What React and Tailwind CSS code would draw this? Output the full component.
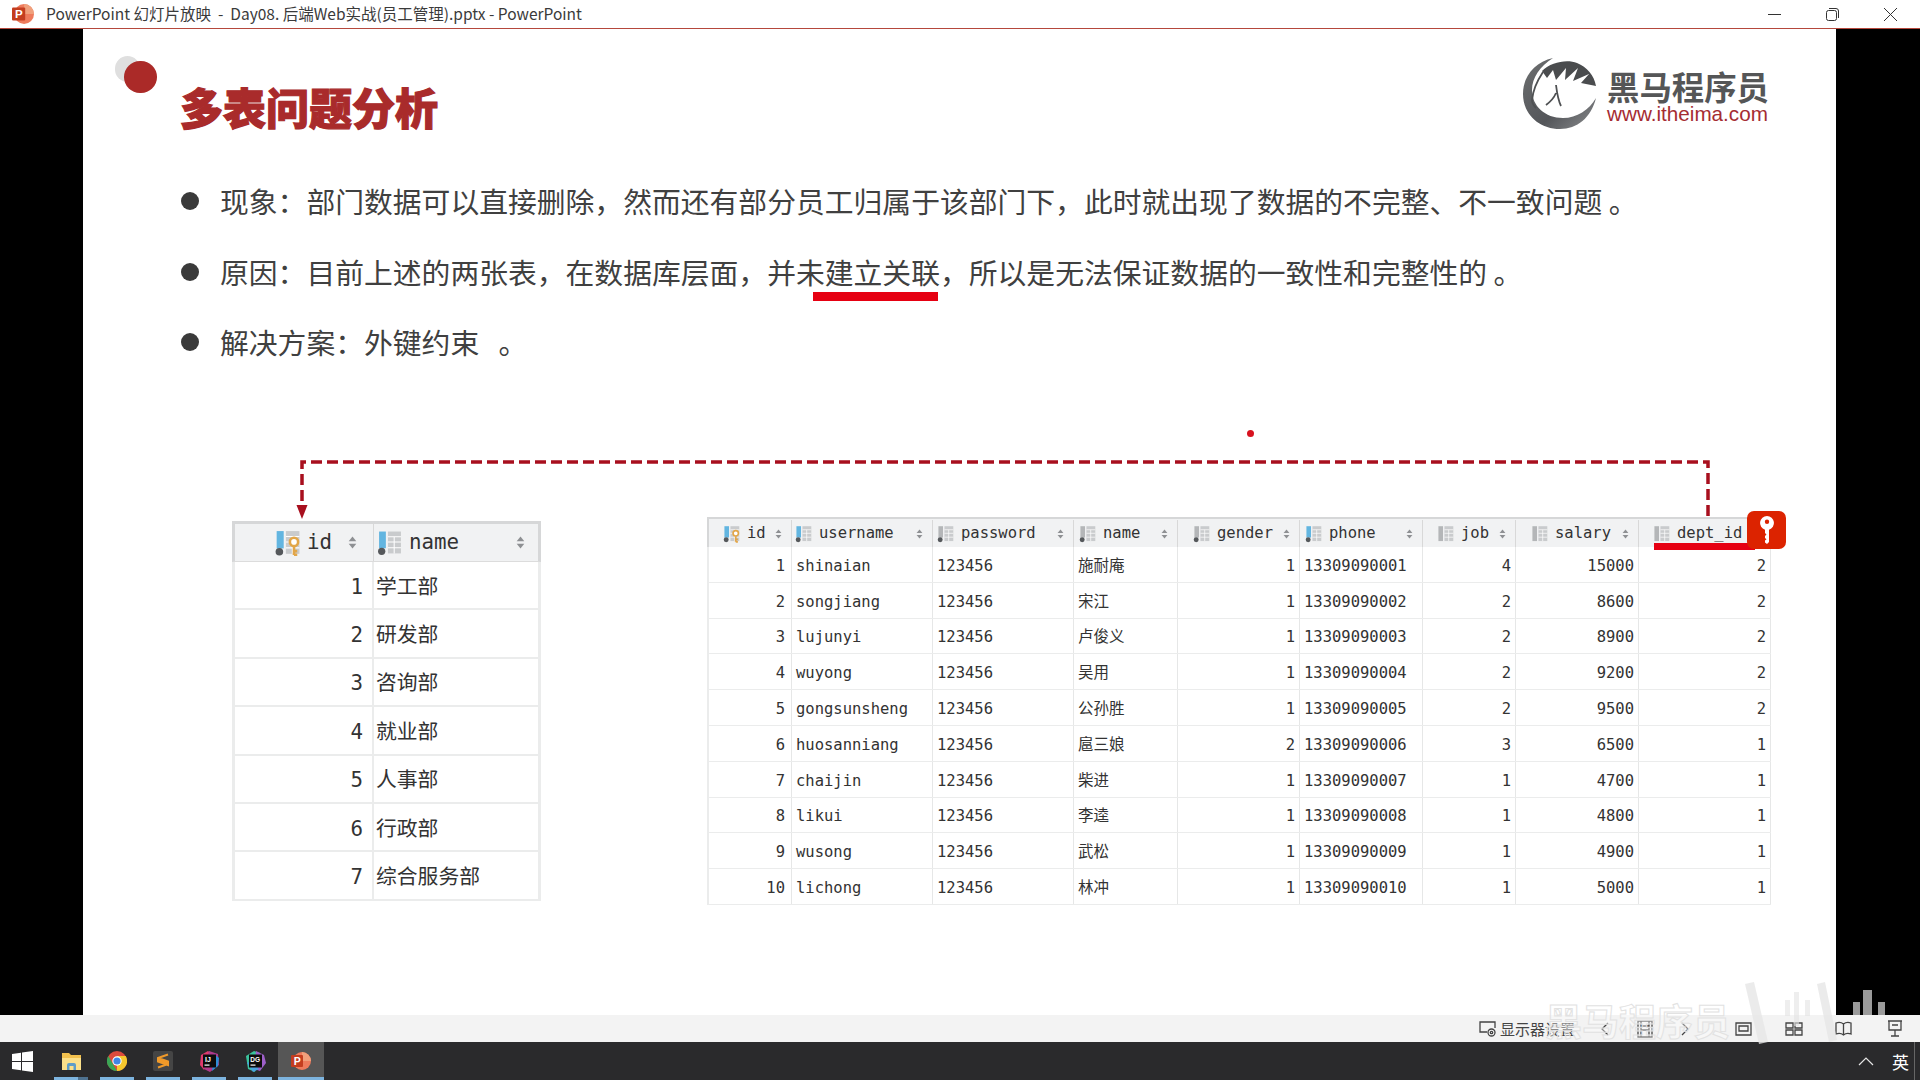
// PowerPoint slideshow window showing the "多表问题分析" slide
const CJK = '[font-family:"Noto_Sans_CJK_SC","Noto_Sans",sans-serif]';
const MONO = '[font-family:"DejaVu_Sans_Mono","Noto_Sans_CJK_SC",monospace]';

const empColumns = [
  { name: 'id', pl: 'pl-[14px]', color: 'blue', hasKey: true, dot: true },
  { name: 'username', pl: 'pl-[3px]', color: 'blue', dot: true },
  { name: 'password', pl: 'pl-[4px]', color: 'gray', dot: true },
  { name: 'name', pl: 'pl-[5px]', color: 'gray', dot: true },
  { name: 'gender', pl: 'pl-[15px]', color: 'gray', dot: true },
  { name: 'phone', pl: 'pl-[5px]', color: 'blue', dot: true },
  { name: 'job', pl: 'pl-[14px]', color: 'gray' },
  { name: 'salary', pl: 'pl-[15px]', color: 'gray' },
  { name: 'dept_id', pl: 'pl-[14px]', color: 'gray' },
];

const employees = [
  [1, 'shinaian', '123456', '施耐庵', 1, '13309090001', 4, 15000, 2],
  [2, 'songjiang', '123456', '宋江', 1, '13309090002', 2, 8600, 2],
  [3, 'lujunyi', '123456', '卢俊义', 1, '13309090003', 2, 8900, 2],
  [4, 'wuyong', '123456', '吴用', 1, '13309090004', 2, 9200, 2],
  [5, 'gongsunsheng', '123456', '公孙胜', 1, '13309090005', 2, 9500, 2],
  [6, 'huosanniang', '123456', '扈三娘', 2, '13309090006', 3, 6500, 1],
  [7, 'chaijin', '123456', '柴进', 1, '13309090007', 1, 4700, 1],
  [8, 'likui', '123456', '李逵', 1, '13309090008', 1, 4800, 1],
  [9, 'wusong', '123456', '武松', 1, '13309090009', 1, 4900, 1],
  [10, 'lichong', '123456', '林冲', 1, '13309090010', 1, 5000, 1],
];

const depts = ['学工部', '研发部', '咨询部', '就业部', '人事部', '行政部', '综合服务部'];

function ColumnIcon({ color, dot, hasKey, className }) {
  return (
    <svg className={className} viewBox="0 0 24 24">
      <rect x="2" y="1" width="6.5" height={dot ? 16 : 21} fill={color === 'blue' ? '#62b5e0' : '#b4b6b8'} />
      <rect x="10.5" y="1" width="12.5" height="21" fill="#c9cbcd" />
      <path d="M10.5 6h12.5M10.5 11h12.5M10.5 16.500h12.500M16.500 6v16" stroke="#fff" strokeWidth="1" />
      {dot && <circle cx="4.500" cy="20" r="3.500" fill="#55585b" />}
      {hasKey && (
        <g fill="none" stroke="#e2a648" strokeWidth="2.400">
          <circle cx="18" cy="11" r="3.800" fill="#fff" />
          <path d="M18 15v8M18 19.500h3M18 23h3" />
        </g>
      )}
    </svg>
  );
}

function SortArrows({ className }) {
  return (
    <svg className={className} viewBox="0 0 8 12" fill="#8e9093">
      <path d="M4 0.500L7.500 4.800H0.500z" />
      <path d="M4 11.500L7.500 7.200H0.500z" />
    </svg>
  );
}

function DeptTable() {
  return (
    <div className={`w-[309px] mt-[4px] ${MONO} text-[20.800px] text-[#333]`}>
      <div className="grid grid-cols-[139px_170px] h-[41px] bg-[#f1f2f3] border-t-[3px] border-x-[3px] border-[#d6d7d8] border-b border-b-[#dcdcdc]">
        <div className="flex items-center pl-[39px] pr-[16px] border-r border-[#d8d8d8]">
          <ColumnIcon color="blue" dot hasKey className="w-[27px] h-[26px] shrink-0" />
          <span className="ml-[6px] flex-1">id</span>
          <SortArrows className="w-[9px] h-[13px]" />
        </div>
        <div className="flex items-center pl-[3px] pr-[19px]">
          <ColumnIcon color="blue" dot className="w-[25px] h-[26px] shrink-0" />
          <span className="ml-[7px] flex-1">name</span>
          <SortArrows className="w-[9px] h-[13px]" />
        </div>
      </div>
      {depts.map((dept, i) => (
        <div key={dept} className="grid grid-cols-[139px_170px] h-[48.400px] border-x-[3px] border-b-2 border-[#ebecec]">
          <div className="flex items-center justify-end pt-[4px] pr-[9px] border-r-2 border-[#ebecec]">{i + 1}</div>
          <div className="flex items-center pt-[4px] pl-[2px]">{dept}</div>
        </div>
      ))}
    </div>
  );
}

function EmployeeTable() {
  return (
    <div className={`relative w-[1064px] ml-[166px] ${MONO} text-[15.500px] text-[#333]`}>
      <div className="grid grid-cols-[83px_141px_141px_104px_122px_123px_93px_123px_132px] h-[30px] pt-[1px] bg-[#f1f2f3] border-t-2 border-l-2 border-[#d6d7d8]">
        {empColumns.map((col) => (
          <div key={col.name} className={`flex items-center pr-[9px] border-r border-[#d8d8d8] ${col.pl}`}>
            <ColumnIcon color={col.color} dot={col.dot} hasKey={col.hasKey} className="w-[17px] h-[18px] shrink-0" />
            <span className="ml-[7px] flex-1">{col.name}</span>
            <SortArrows className="w-[7px] h-[10px]" />
          </div>
        ))}
      </div>
      {employees.map((row) => (
        <div key={row[0]} className="grid grid-cols-[83px_141px_141px_104px_122px_123px_93px_123px_132px] h-[35.800px] border-l-2 border-b border-[#ebecec] last:border-b-0">
          {row.map((val, i) => (
            <div
              key={i}
              className={`flex items-center pt-[4px] border-r border-[#e6e7e7] ${typeof val === 'number' ? (i === 0 ? 'justify-end pr-[6px]' : 'justify-end pr-[4px]') : 'pl-[4px]'}`}
            >
              {val}
            </div>
          ))}
        </div>
      ))}
      {/* 外键 marker over the dept_id header */}
      <div className="absolute left-[947px] top-[26px] w-[101px] h-[7px] bg-[#e60012]" />
      <div className="absolute left-[1040px] top-[-6px] w-[39px] h-[38px] rounded-[7px] bg-[#dc2300] flex items-center justify-center">
        <svg className="w-[16px] h-[28px]" viewBox="0 0 16 28" fill="#fff">
          <path d="M8 0a7 7 0 0 1 2 13.700V26l-2 2-2-1.500v-2l1.500-1.300L6 22v-2l1.500-1.500L6 17v-3.300A7 7 0 0 1 8 0zm0 3.500a2.200 2.200 0 1 0 0 4.400 2.200 2.200 0 0 0 0-4.400z" />
        </svg>
      </div>
    </div>
  );
}

function HorseLogo() {
  return (
    <svg className="w-[76px] h-[71px]" viewBox="0 0 76 71">
      <defs>
        <linearGradient id="ring" x1="0" y1="0" x2="1" y2="1">
          <stop offset="0" stopColor="#6d6f70" />
          <stop offset="0.600" stopColor="#54565a" />
          <stop offset="1" stopColor="#8a8c8e" />
        </linearGradient>
      </defs>
      {/* outer crescent */}
      <path d="M30 0C12 4 0 18 0 36c0 20 16 35 37 35 17 0 31-11 36-31-7 12-19 20-33 20C22 60 9 48 9 32 9 20 17 8 30 0z" fill="url(#ring)" />
      {/* dark top of the disc, its lower edge is the mane */}
      <path d="M19 13C28 4 44 1 54 5c10 4 17 12 19 23L58 25l8-9-16 7 5-13-13 12 1-12-10 12-3-10-6 8z" fill="#4a4c4e" />
      {/* face and neck lines */}
      <path d="M20 14C14 23 10 32 9 42c0 3 2 6 4 8M33 27c1 8 2 15 5 21M33 35c-2 5-6 9-10 12" fill="none" stroke="#4f5153" strokeWidth="1.800" />
    </svg>
  );
}

function Slide() {
  return (
    <div className={`relative flex-1 bg-white flex flex-col pt-[47px] ${CJK}`}>
      {/* 章节圆点 */}
      <div className="absolute left-[32px] top-[27px] w-[25px] h-[26px] rounded-full bg-[#dfdfdf]" />
      <div className="absolute left-[41px] top-[32px] w-[33px] h-[32px] rounded-full bg-[#ab2a28]" />

      <div className="absolute left-[1440px] top-[29px] flex items-start gap-[8px]">
        <HorseLogo />
        <div className="w-[165px] mt-[11px]">
          <div className="text-[32.400px] leading-[34px] font-bold text-[#555657] whitespace-nowrap">黑马程序员</div>
          <div className="text-[20.700px] leading-[22px] text-[#a52c32] [font-family:'Liberation_Sans',sans-serif] whitespace-nowrap">www.itheima.com</div>
        </div>
      </div>

      <h1 className="pl-[97px] text-[43px] leading-[60px] font-black text-[#a92b2b] [-webkit-text-stroke:1.200px_#a92b2b]">多表问题分析</h1>

      <ul className="pl-[98px] mt-[45px] flex flex-col gap-[30.500px] text-[28.800px] leading-[40px] text-[#404040] whitespace-pre">
        <li className="flex items-center gap-[21px]">
          <span className="w-[18px] h-[18px] rounded-full bg-[#3a3a3a]" />
          现象：部门数据可以直接删除，然而还有部分员工归属于该部门下，此时就出现了数据的不完整、不一致问题 。
        </li>
        <li className="flex items-center gap-[21px]">
          <span className="w-[18px] h-[18px] rounded-full bg-[#3a3a3a]" />
          <span>
            原因：目前上述的两张表，在数据库层面，并未
            <span className="relative">
              建立关联
              <span className="absolute left-[-12px] top-[41px] w-[125px] h-[9px] bg-[#e60012]" />
            </span>
            ，所以是无法保证数据的一致性和完整性的 。
          </span>
        </li>
        <li className="flex items-center gap-[21px]">
          <span className="w-[18px] h-[18px] rounded-full bg-[#3a3a3a]" />
          解决方案：外键约束   。
        </li>
      </ul>

      <div className="relative flex items-start ml-[149px] mt-[155px]">
        <DeptTable />
        <EmployeeTable />
        {/* 外键连线 */}
        <svg className="absolute left-[61px] top-[-58px] w-[1420px] h-[62px] overflow-visible" viewBox="0 0 1420 62" fill="none">
          <path d="M1415 57V3H9V46" stroke="#a80f1e" strokeWidth="3.500" strokeDasharray="11 5" />
          <path d="M3.500 46h11L9 60z" fill="#a80f1e" />
        </svg>
      </div>

      {/* 激光笔 */}
      <div className="absolute left-[1164px] top-[401px] w-[7px] h-[7px] rounded-full bg-[#d8121f]" />
    </div>
  );
}

function StatusBar() {
  return (
    <div className={`h-[27px] bg-[#f3f3f3] flex items-center pl-[1479px] text-[#444] ${CJK}`}>
      <svg className="w-[19px] h-[18px]" viewBox="0 0 19 18" fill="none" stroke="#444" strokeWidth="1.300">
        <path d="M8 12H1V2h15v6" />
        <circle cx="12.500" cy="12.500" r="3.500" />
        <circle cx="12.500" cy="12.500" r="1.200" />
      </svg>
      <span className="ml-[2px] text-[15px] leading-none whitespace-nowrap">显示器设置</span>
      <svg className="ml-[25px] w-[10px] h-[14px]" viewBox="0 0 10 14" fill="none" stroke="#444" strokeWidth="1.300"><path d="M8 1L2 7l6 6" /></svg>
      <svg className="ml-[27px] w-[16px] h-[18px]" viewBox="0 0 16 18" fill="none" stroke="#444" strokeWidth="1.300"><path d="M1 1h14v16H1zM4 1v16M12 1v16M4 6h8M4 10h8" /></svg>
      <svg className="ml-[27px] w-[10px] h-[14px]" viewBox="0 0 10 14" fill="none" stroke="#444" strokeWidth="1.300"><path d="M2 1l6 6-6 6" /></svg>
      <svg className="ml-[45px] w-[17px] h-[14px]" viewBox="0 0 17 14" fill="none" stroke="#444" strokeWidth="1.300"><path d="M1 1h15v12H1zM4 4h9v5H4z" /></svg>
      <svg className="ml-[33px] w-[18px] h-[14px]" viewBox="0 0 18 14" fill="none" stroke="#444" strokeWidth="1.300"><path d="M1 1h7v5H1zM10 1h7v5h-7zM1 8h7v5H1zM10 8h7v5h-7z" /></svg>
      <svg className="ml-[32px] w-[17px] h-[15px]" viewBox="0 0 17 15" fill="none" stroke="#444" strokeWidth="1.300"><path d="M1 2c3-1 5-1 7.500 1C11 1 13 1 16 2v11c-3-1-5-1-7.500 1C6 12 4 12 1 13zM8.500 3v11" /></svg>
      <svg className="ml-[35px] w-[16px] h-[17px]" viewBox="0 0 16 17" fill="none" stroke="#444" strokeWidth="1.300"><path d="M1 1h14M2 1v9h12V1M8 10v6M4 16h8M5 5h6" /></svg>
    </div>
  );
}

function TaskIcon({ active, split, children }) {
  return (
    <div className={`relative w-[46px] h-full flex items-center justify-center ${active ? 'bg-[#565656]' : ''}`}>
      {children}
      <div className={`absolute bottom-0 h-[3px] bg-[#7db4df] ${active ? 'inset-x-0' : 'inset-x-[6px]'}`} />
      {split && <div className="absolute bottom-0 right-[6px] w-[10px] h-[3px] bg-[#4f7290]" />}
    </div>
  );
}

function Taskbar() {
  return (
    <div className="h-[38px] bg-[#2a2a2c] flex items-center pr-[11px]">
      <div className="w-[48px] h-full flex items-center pl-[12px]">
        <svg className="w-[21px] h-[21px]" viewBox="0 0 21 21" fill="#fff">
          <path d="M0 3l9-1.300V10H0zM10 1.500L21 0v10H10zM0 11h9v8.300L0 18zM10 11h11v10l-11-1.500z" />
        </svg>
      </div>
      <TaskIcon split>
        <svg className="w-[19px] h-[19px]" viewBox="0 0 19 19">
          <path d="M0 1h7l2 2h10v15H0z" fill="#f2c14e" />
          <path d="M0 6h19v12H0z" fill="#fbe08a" />
          <path d="M5 18v-5a2 2 0 0 1 2-2h5a2 2 0 0 1 2 2v5h-2.500v-4h-4v4z" fill="#5e9dc8" />
        </svg>
      </TaskIcon>
      <TaskIcon>
        <svg className="w-[20px] h-[20px]" viewBox="0 0 20 20">
          <circle cx="10" cy="10" r="10" fill="#dd4b3d" />
          <path d="M10 20a10 10 0 0 0 8.700-15H10z" fill="#f6c82e" />
          <path d="M10 20a10 10 0 0 1-8.700-15L6 13z" fill="#3aa655" />
          <circle cx="10" cy="10" r="4.700" fill="#fff" />
          <circle cx="10" cy="10" r="3.600" fill="#3f86e6" />
        </svg>
      </TaskIcon>
      <TaskIcon>
        <svg className="w-[20px] h-[20px]" viewBox="0 0 20 20">
          <rect width="20" height="20" rx="2" fill="#454545" />
          <path d="M15 3.500L5 7v3.500l10 3.500V10.500L5 7M5 16.500l10-3.500" stroke="#f09a2a" strokeWidth="2" fill="#f09a2a" />
        </svg>
      </TaskIcon>
      <TaskIcon>
        <svg className="w-[21px] h-[21px]" viewBox="0 0 21 21">
          <path d="M2 4l7-4 4 3-8 16-4-5z" fill="#e23a6e" />
          <path d="M10 0l9 3 1 11-9 7-6-3z" fill="#b03a8c" />
          <path d="M15 3l5 4-1 8-6 5z" fill="#2d8fd6" />
          <rect x="4" y="3.500" width="13" height="13" fill="#0c0c0c" />
          <rect x="5.500" y="13.500" width="5" height="1.200" fill="#fff" />
          <text x="6" y="11" fontSize="7" fontWeight="700" fill="#fff" fontFamily="Liberation Sans">IJ</text>
        </svg>
      </TaskIcon>
      <TaskIcon>
        <svg className="w-[21px] h-[21px]" viewBox="0 0 21 21">
          <path d="M1 5l8-5 6 2-5 19-7-3z" fill="#3bc49d" />
          <path d="M11 0l8 4 2 8-6 8-6-2z" fill="#9d5fc9" />
          <path d="M2 12l6 9 6-3-8-8z" fill="#4aa3e0" />
          <rect x="4" y="3.500" width="13" height="13" fill="#0c0c0c" />
          <rect x="5.500" y="13.500" width="5" height="1.200" fill="#fff" />
          <text x="5.200" y="11" fontSize="6.500" fontWeight="700" fill="#fff" fontFamily="Liberation Sans">DG</text>
        </svg>
      </TaskIcon>
      <TaskIcon active>
        <PptLogo className="w-[20px] h-[20px]" />
      </TaskIcon>
      <div className="ml-auto flex items-center gap-[18px] h-full">
        <svg className="w-[16px] h-[9px]" viewBox="0 0 16 9" fill="none" stroke="#e6e6e6" strokeWidth="1.200"><path d="M1 8l7-7 7 7" /></svg>
        <span className={`text-[17px] leading-none text-white ${CJK}`}>英</span>
      </div>
    </div>
  );
}

function PptLogo({ className }) {
  return (
    <svg className={className} viewBox="0 0 20 20">
      <circle cx="11" cy="10" r="9" fill="#ee7b5c" />
      <path d="M11 1a9 9 0 0 1 9 9h-9z" fill="#f0a07c" />
      <rect x="0" y="4" width="12" height="12" rx="1" fill="#c43d1f" />
      <text x="2.800" y="13.700" fontSize="10.500" fontWeight="700" fill="#fff" fontFamily="Liberation Sans">P</text>
    </svg>
  );
}

export default function App() {
  return (
    <div className="relative w-[1920px] h-[1080px] overflow-hidden flex flex-col bg-black">
      <div className={`h-[29px] shrink-0 bg-white border-b border-[#b5483c] flex items-center pl-[12px] text-[15.500px] text-[#3a3a3a] ${CJK}`}>
        <PptLogo className="w-[22px] h-[22px]" />
        <span className="ml-[12px] whitespace-pre">PowerPoint 幻灯片放映  -  Day08. 后端Web实战(员工管理).pptx - PowerPoint</span>
        <div className="ml-auto flex items-center h-full pr-[23px] gap-[45px]">
          <svg className="w-[13px] h-[13px]" viewBox="0 0 13 13" stroke="#333" strokeWidth="1"><path d="M0 6.500h13" /></svg>
          <svg className="w-[13px] h-[13px]" viewBox="0 0 13 13" fill="none" stroke="#333" strokeWidth="1"><rect x="0.500" y="2.500" width="10" height="10" rx="2" /><path d="M3 .5h7a2.500 2.500 0 0 1 2.500 2.500v7" /></svg>
          <svg className="w-[13px] h-[13px]" viewBox="0 0 13 13" stroke="#333" strokeWidth="1"><path d="M0 0l13 13M13 0L0 13" /></svg>
        </div>
      </div>

      <div className="flex-1 flex">
        <div className="w-[83px] bg-black" />
        <Slide />
        <div className="w-[84px] bg-black" />
      </div>

      <StatusBar />
      <Taskbar />

      {/* 视频水印 */}
      <div className={`absolute left-[1545px] top-[998px] text-[37px] leading-[44px] font-bold text-white/40 [-webkit-text-stroke:1px_#e2e2e2] whitespace-nowrap ${CJK}`}>黑马程序员</div>
      <svg className="absolute left-[1745px] top-[980px] w-[145px] h-[64px]" viewBox="0 0 145 64">
        <path d="M0 4l9-2 14 60-9 2zM72 4l8-2 12 58-8 2z" fill="#e6e6e6" opacity="0.800" />
        <path d="M40 20h5v16h-5zM60 20h5v16h-5zM49 12h5v34h-5z" fill="#e2e2e2" opacity="0.600" />
        <path d="M108 22h7v13h-7zM133 22h7v13h-7zM118 10h9v25h-9z" fill="#9a9a9a" />
      </svg>
      <div className="absolute left-[1914px] top-[1042px] w-px h-[38px] bg-[#666]" />
    </div>
  );
}
